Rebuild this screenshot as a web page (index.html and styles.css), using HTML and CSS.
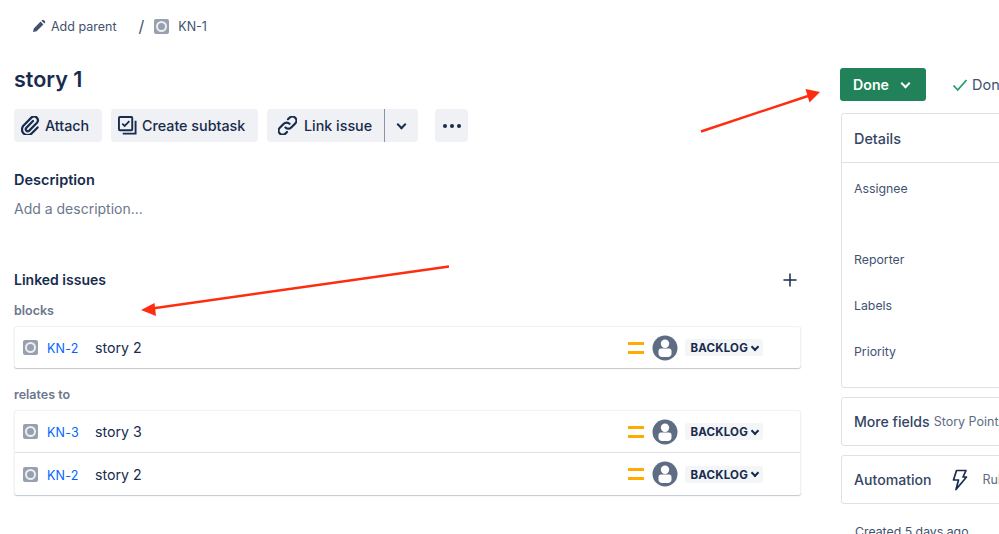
FILE: index.html
```html
<!DOCTYPE html>
<html lang="en">
<head>
    <meta charset="UTF-8">
    <title>KN-1 story 1</title>
    <link rel="stylesheet" href="styles.css">
</head>
<body>
    <div class="page">
        <div class="main">
            <div class="crumbs">
                <svg class="pencil" width="14" height="14" viewBox="0 0 14 14"><path d="M1 13l.8-3.600L8.600 2.600l2.800 2.800-6.800 6.800zM9.500 1.700l.8-.7a1 1 0 0 1 1.400 0l1.300 1.300a1 1 0 0 1 0 1.400l-.7.8z" fill="#42526e"/></svg>
                <span class="crumb-parent">Add parent</span>
                <span class="crumb-sep">/</span>
                <span class="type-icon"></span>
                <span class="crumb-key">KN-1</span>
            </div>
            <h1 class="title">story 1</h1>
            <div class="actions">
                <button class="btn btn-attach">
                    <svg width="19" height="19" viewBox="1.500 1.500 19 19" fill="none" stroke="#172b4d" stroke-width="2.200" stroke-linecap="round"><path d="M13.500 6.500l-6.800 7a2 2 0 0 0 2.800 2.800l8-8.100a3.800 3.800 0 0 0-5.400-5.300l-8 8.200a5.600 5.600 0 0 0 8 7.900l6-6.100"/></svg>
                    Attach
                </button>
                <button class="btn btn-subtask">
                    <svg width="19" height="19" viewBox="0 0 20 20" fill="none" stroke="#172b4d" stroke-width="2"><rect x="1" y="1" width="14" height="14" rx="1"/><path d="M4.500 8l2.500 2.500 5-5" stroke-width="1.800"/><path d="M18.500 5v13.500H5" /></svg>
                    Create subtask
                </button>
                <div class="split">
                    <button class="btn btn-link">
                        <svg width="19" height="19" viewBox="1.500 1.500 19 19" fill="none" stroke="#172b4d" stroke-width="2.200" stroke-linecap="round"><path d="M9 13a4 4 0 0 0 5.700 0l4-4A4 4 0 0 0 13 3.300l-1.500 1.500"/><path d="M13 9.300a4 4 0 0 0-5.700 0l-4 4A4 4 0 0 0 9 19l1.500-1.500"/></svg>
                        Link issue
                    </button>
                    <button class="btn btn-caret"><span class="caret"></span></button>
                </div>
                <button class="btn btn-more"><i></i><i></i><i></i></button>
            </div>
            <h2 class="section-title desc-title">Description</h2>
            <div class="desc-text">Add a description...</div>
            <div class="linked-head">
                <h2 class="section-title linked-title">Linked issues</h2>
                <svg class="plus" width="14" height="14" viewBox="0 0 14 14"><path d="M7 1v12M1 7h12" stroke="#172b4d" stroke-width="1.500" stroke-linecap="round"/></svg>
            </div>
            <div class="group-label">blocks</div>
            <div class="card">
                <div class="row">
                    <span class="type-icon"></span>
                    <a class="key">KN-2</a>
                    <span class="summary">story 2</span>
                    <span class="priority"></span>
                    <span class="avatar"><svg width="26" height="26" viewBox="0 0 26 26"><circle cx="13" cy="13" r="12.500" fill="#5e6c84"/><circle cx="13" cy="8.700" r="4.200" fill="#fff"/><path d="M6.500 16a2.500 2.500 0 0 1 2.500-2.500h8a2.500 2.500 0 0 1 2.500 2.500v2.500c0 2-1.500 3.500-3.500 3.500h-6c-2 0-3.500-1.500-3.500-3.500z" fill="#fff"/></svg></span>
                    <span class="status">BACKLOG<span class="caret caret-small"></span></span>
                </div>
            </div>
            <div class="group-label second">relates to</div>
            <div class="card">
                <div class="row">
                    <span class="type-icon"></span>
                    <a class="key">KN-3</a>
                    <span class="summary">story 3</span>
                    <span class="priority"></span>
                    <span class="avatar"><svg width="26" height="26" viewBox="0 0 26 26"><circle cx="13" cy="13" r="12.500" fill="#5e6c84"/><circle cx="13" cy="8.700" r="4.200" fill="#fff"/><path d="M6.500 16a2.500 2.500 0 0 1 2.500-2.500h8a2.500 2.500 0 0 1 2.500 2.500v2.500c0 2-1.500 3.500-3.500 3.500h-6c-2 0-3.500-1.500-3.500-3.500z" fill="#fff"/></svg></span>
                    <span class="status">BACKLOG<span class="caret caret-small"></span></span>
                </div>
                <div class="row">
                    <span class="type-icon"></span>
                    <a class="key">KN-2</a>
                    <span class="summary">story 2</span>
                    <span class="priority"></span>
                    <span class="avatar"><svg width="26" height="26" viewBox="0 0 26 26"><circle cx="13" cy="13" r="12.500" fill="#5e6c84"/><circle cx="13" cy="8.700" r="4.200" fill="#fff"/><path d="M6.500 16a2.500 2.500 0 0 1 2.500-2.500h8a2.500 2.500 0 0 1 2.500 2.500v2.500c0 2-1.500 3.500-3.500 3.500h-6c-2 0-3.500-1.500-3.500-3.500z" fill="#fff"/></svg></span>
                    <span class="status">BACKLOG<span class="caret caret-small"></span></span>
                </div>
            </div>
        </div>

        <div class="side">
            <div class="side-top">
                <button class="done-btn">Done<span class="caret caret-white"></span></button>
                <svg class="check" width="16" height="14" viewBox="0 0 16 14"><path d="M1.500 7.500l4.200 4.500L14.500 2" fill="none" stroke="#22a06b" stroke-width="1.800"/></svg>
                <span class="done-text">Done</span>
            </div>
            <div class="panel details">
                <div class="panel-head">Details</div>
                <div class="fields">
                    <div class="field f-assignee">Assignee</div>
                    <div class="field f-reporter">Reporter</div>
                    <div class="field f-labels">Labels</div>
                    <div class="field">Priority</div>
                </div>
            </div>
            <div class="panel panel-row">
                <span class="panel-name">More fields</span>
                <span class="panel-sub">Story Points</span>
            </div>
            <div class="panel panel-row">
                <span class="panel-name">Automation</span>
                <svg class="bolt" width="16" height="22" viewBox="0 0 16 22"><path d="M4.500 1.500h9.500l-3 6.500h3.500L4 20.500l2.500-9.500H1.500z" fill="none" stroke="#172b4d" stroke-width="1.700" stroke-linejoin="round"/></svg>
                <span class="panel-sub">Rule executions</span>
            </div>
            <div class="created">Created 5 days ago</div>
        </div>
    </div>

    <!-- red annotation arrows drawn over the screenshot -->
    <svg class="arrows" width="999" height="534" viewBox="0 0 999 534">
        <path d="M701 131.500L808 96" stroke="#ff2d0f" stroke-width="2.400" fill="none"/>
        <path d="M820 92l-14.500-3 4 13.500z" fill="#ff2d0f"/>
        <path d="M449 266.500L152 308.500" stroke="#ff2d0f" stroke-width="2.400" fill="none"/>
        <path d="M141 310l13.500-7 1.500 13z" fill="#ff2d0f"/>
    </svg>
</body>
</html>
```

FILE: styles.css
```css
* {
    margin: 0;
    padding: 0;
    box-sizing: border-box;
}

html, body {
    height: 534px;
    overflow: hidden;
}

body {
    font-family: Inter, "Liberation Sans", sans-serif;
    background-color: #fff;
    color: #172b4d;
    position: relative;
}

button {
    font-family: inherit;
    border: none;
    cursor: pointer;
}

.page {
    display: flex;
    width: 1200px;
}

.main {
    width: 787px;
    margin-left: 14px;
    flex-shrink: 0;
}

/* breadcrumb */
.crumbs {
    display: flex;
    align-items: center;
    height: 20px;
    margin-top: 16px;
    padding-left: 18px;
    font-size: 12.500px;
    color: #42526e;
}

.crumb-parent {
    margin-left: 5px;
}

.crumb-sep {
    margin-left: 22px;
    margin-right: 10px;
    font-size: 16px;
}

.crumb-key {
    margin-left: 9px;
}

.type-icon {
    display: flex;
    align-items: center;
    justify-content: center;
    width: 15px;
    height: 15px;
    flex-shrink: 0;
    border-radius: 2px;
    background-color: #97a0af;
}

.type-icon::after {
    content: "";
    width: 7px;
    height: 7px;
    border: 2px solid #eceef1;
    border-radius: 50%;
}

.title {
    margin-top: 28px;
    font-size: 21.500px;
    line-height: 30px;
    font-weight: 600;
    color: #172b4d;
}

/* action buttons */
.actions {
    display: flex;
    margin-top: 15px;
}

.btn {
    display: flex;
    align-items: center;
    justify-content: flex-start;
    height: 33px;
    background-color: #f0f1f4;
    border-radius: 4px;
    color: #172b4d;
    font-size: 14.300px;
    font-weight: 500;
}

.btn-attach {
    width: 88px;
    padding-left: 7px;
    gap: 5px;
}

.btn-subtask {
    width: 147px;
    margin-left: 9px;
    padding-left: 7px;
    gap: 5px;
}

.split {
    display: flex;
    margin-left: 9px;
}

.btn-link {
    width: 117px;
    padding-left: 11px;
    gap: 7px;
    border-radius: 4px 0 0 4px;
}

.btn-caret {
    justify-content: center;
    width: 34px;
    border-left: 1px solid #8993a4;
    border-radius: 0 4px 4px 0;
}

.btn-more {
    justify-content: center;
    width: 33px;
    margin-left: 17px;
    gap: 3px;
}

.btn-more i {
    width: 4px;
    height: 4px;
    border-radius: 50%;
    background-color: #172b4d;
}

.caret {
    display: block;
    width: 7px;
    height: 7px;
    margin-top: -3px;
    border-right: 2px solid #172b4d;
    border-bottom: 2px solid #172b4d;
    transform: rotate(45deg);
}

.caret-small {
    width: 6px;
    height: 6px;
    margin-left: 4px;
    margin-top: -3px;
}

.caret-white {
    margin-left: 13px;
    border-color: #fff;
}

/* description and linked issues */
.section-title {
    font-size: 14.500px;
    line-height: 20px;
    font-weight: 600;
    color: #172b4d;
}

.linked-title {
    font-size: 14px;
}

.desc-title {
    margin-top: 28px;
}

.desc-text {
    margin-top: 9px;
    font-size: 14px;
    line-height: 20px;
    color: #6b778c;
}

.linked-head {
    display: flex;
    align-items: center;
    justify-content: space-between;
    margin-top: 51px;
    padding-right: 4px;
}

.group-label {
    margin-top: 13px;
    font-size: 12.500px;
    line-height: 16px;
    font-weight: 600;
    color: #6b778c;
}

.group-label.second {
    margin-top: 19px;
}

.card {
    margin-top: 7px;
    border-radius: 3px;
    background-color: #fff;
    border: 1px solid #f1f2f4;
    border-bottom: none;
    box-shadow: 0 1px 1px rgba(9, 30, 66, 0.25);
}

.row {
    display: flex;
    align-items: center;
    height: 41px;
    padding-left: 8px;
}

.row + .row {
    height: 43px;
    border-top: 1px solid #dfe1e6;
}

.key {
    margin-left: 9px;
    width: 39px;
    padding-top: 2px;
    font-size: 12.500px;
    letter-spacing: 0.2px;
    color: #0065ff;
}

.summary {
    margin-left: 9px;
    font-size: 14.200px;
    color: #172b4d;
}

.priority {
    width: 16px;
    height: 12px;
    margin-left: auto;
    border-top: 3px solid #ffab00;
    border-bottom: 3px solid #ffab00;
}

.avatar {
    display: flex;
    margin-left: 8px;
}

.status {
    display: flex;
    align-items: center;
    height: 17px;
    margin-left: 7px;
    margin-right: 37px;
    padding: 1px 5px 0;
    border-radius: 3px;
    background-color: #f4f5f7;
    font-size: 11.500px;
    font-weight: 700;
    letter-spacing: 0.2px;
    color: #172b4d;
}

/* right column */
.side {
    margin-left: 39px;
    width: 360px;
    flex-shrink: 0;
}

.side-top {
    display: flex;
    align-items: center;
    margin-top: 68px;
}

.done-btn {
    display: flex;
    align-items: center;
    width: 86px;
    height: 33px;
    padding-left: 13px;
    border-radius: 3px;
    background-color: #21825a;
    color: #fff;
    font-size: 14.200px;
    font-weight: 600;
}

.check {
    margin-left: 26px;
}

.done-text {
    margin-left: 4px;
    font-size: 14.500px;
    color: #42526e;
}

.panel {
    margin-left: 1px;
    border: 1px solid #dfe1e6;
    border-radius: 3px;
}

.details {
    margin-top: 12px;
    height: 275px;
}

.panel-head {
    height: 49px;
    padding: 16px 12px 0;
    border-bottom: 1px solid #dfe1e6;
    font-size: 14.400px;
    font-weight: 500;
    color: #344563;
}

.fields {
    padding: 18px 12px 0;
}

.field {
    font-size: 12.300px;
    line-height: 16px;
    color: #42526e;
    margin-bottom: 30px;
}

.f-assignee {
    margin-bottom: 55px;
}

.panel-row {
    display: flex;
    align-items: center;
    height: 49px;
    margin-top: 9px;
    padding-left: 12px;
    white-space: nowrap;
}

.panel-name {
    font-size: 14.100px;
    font-weight: 500;
    color: #344563;
}

.panel-sub {
    margin-left: 4px;
    font-size: 12.500px;
    color: #5e6c84;
}

.bolt {
    margin-left: 20px;
}

.bolt + .panel-sub {
    margin-left: 15px;
}

.created {
    margin-top: 20px;
    padding-left: 15px;
    font-size: 12.300px;
    color: #42526e;
}

.arrows {
    position: absolute;
    top: 0;
    left: 0;
    pointer-events: none;
}
```
